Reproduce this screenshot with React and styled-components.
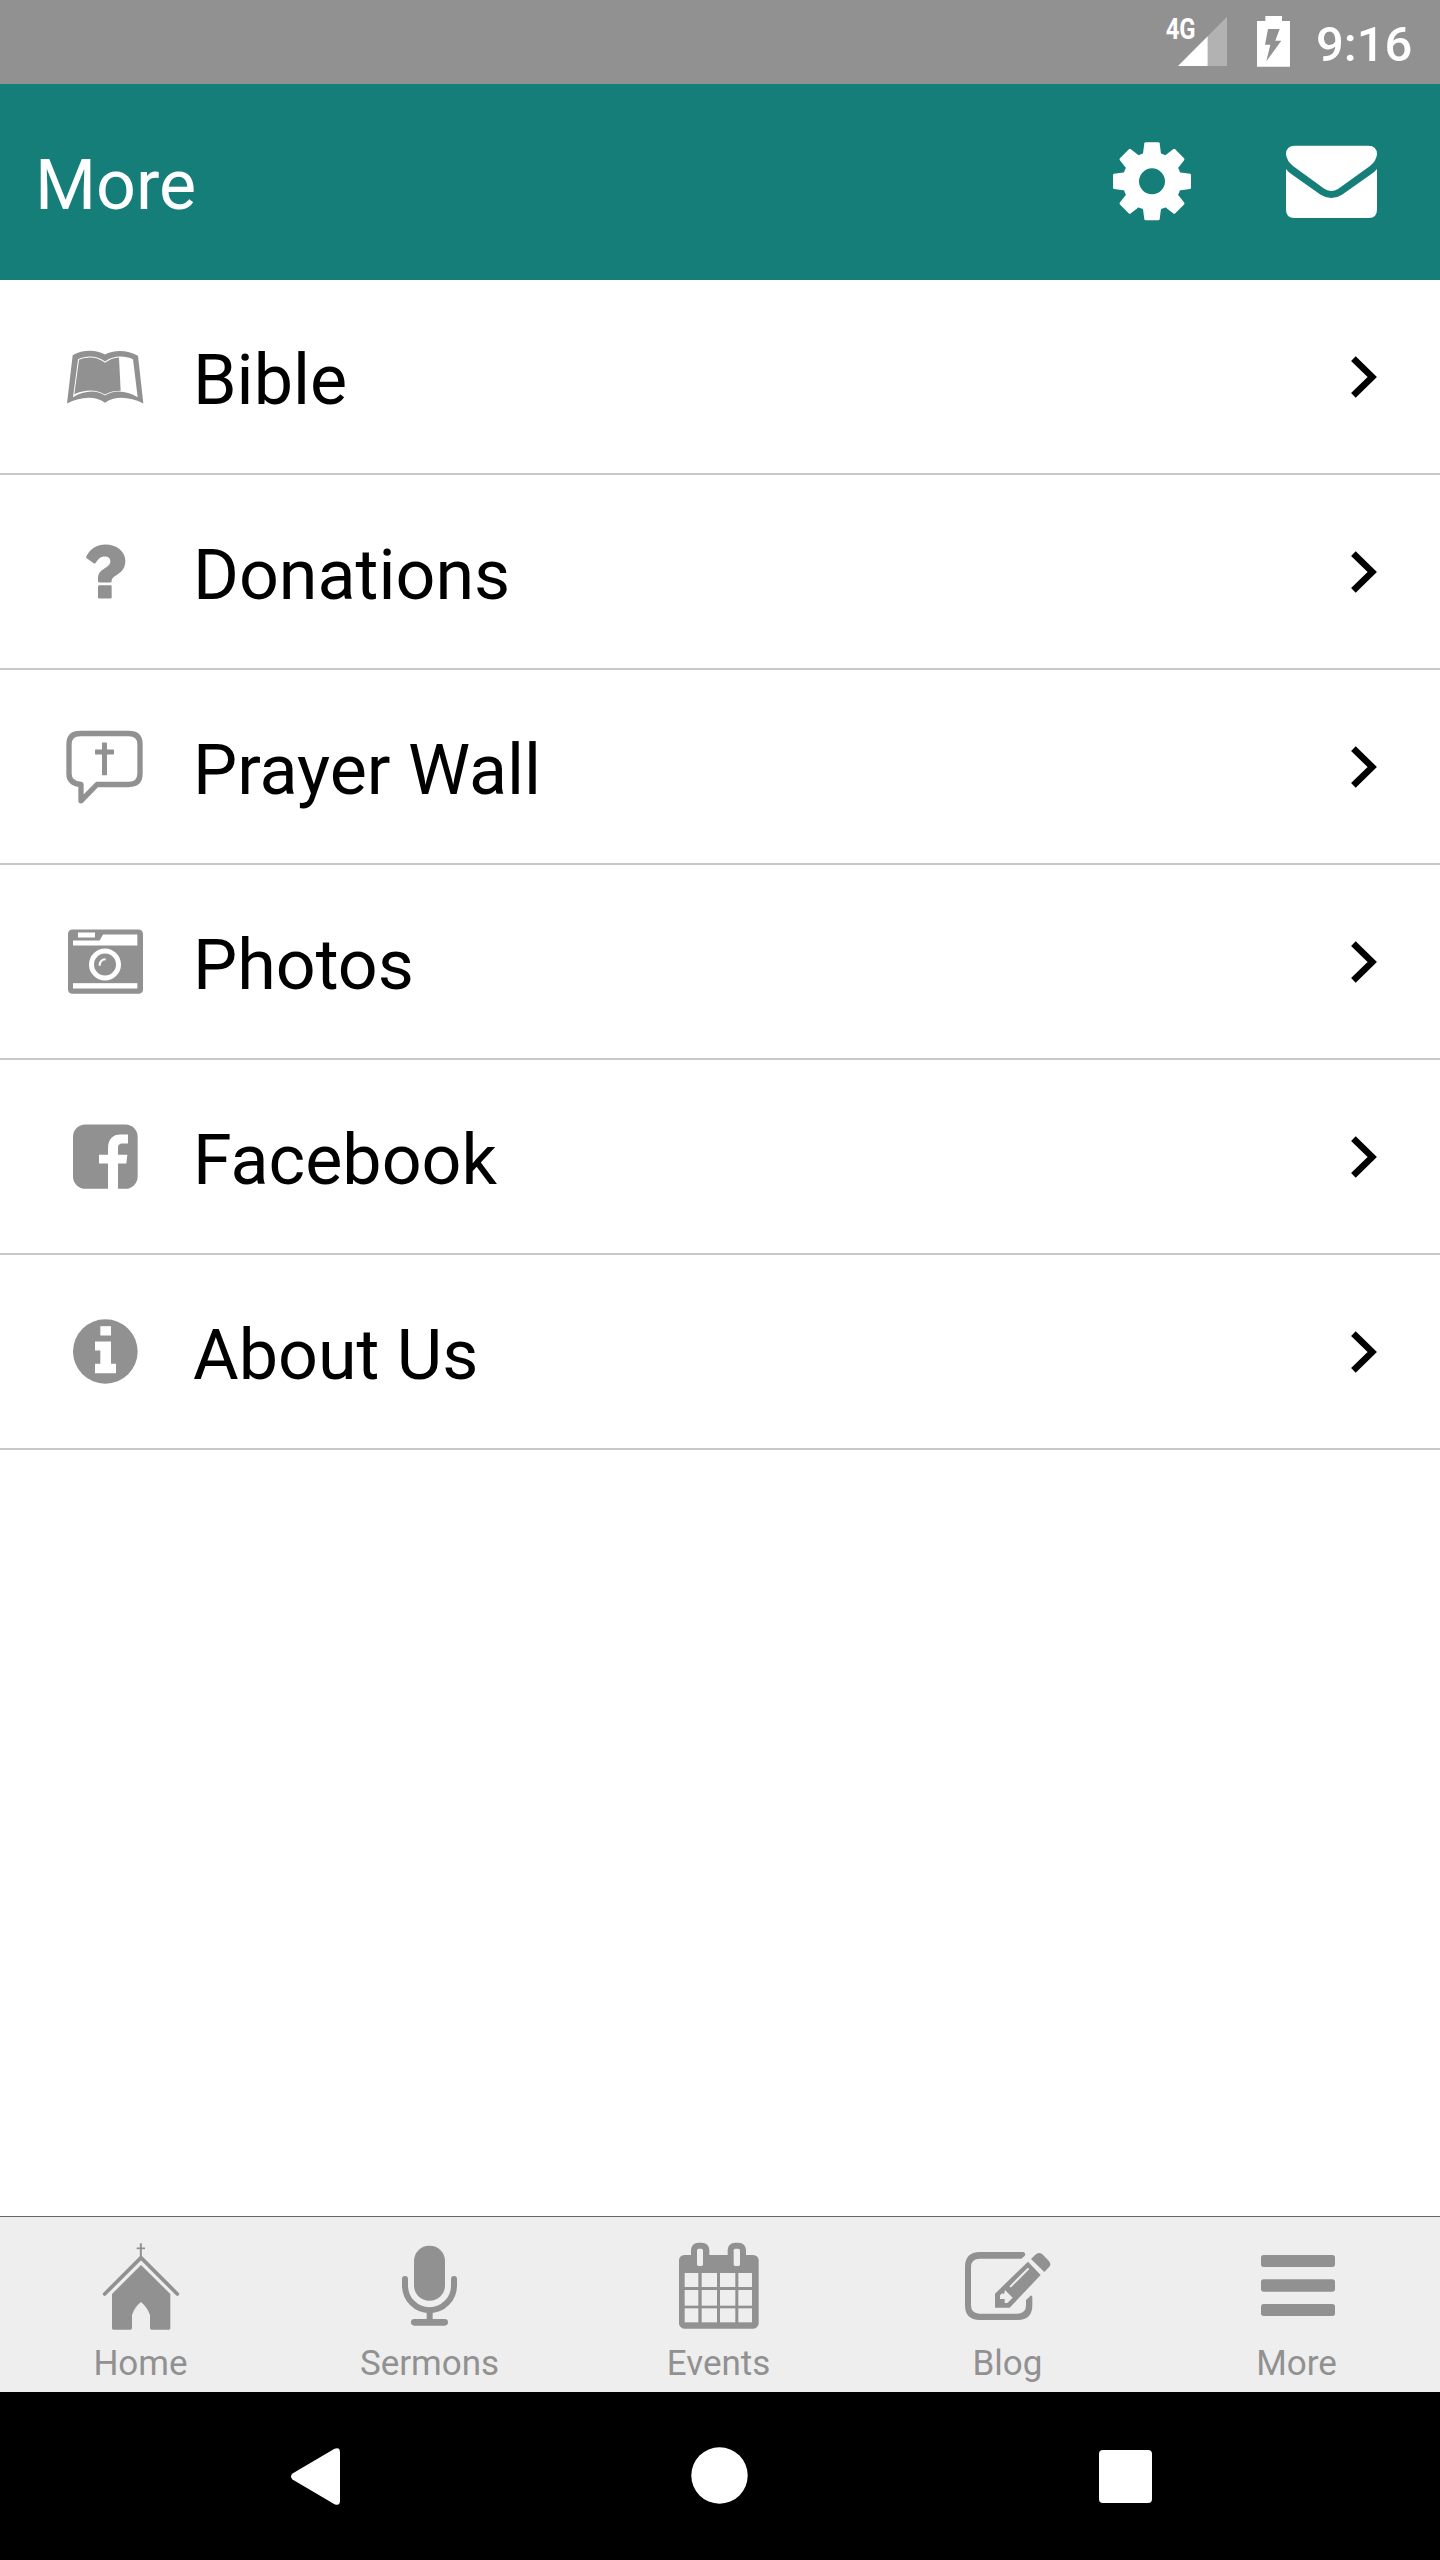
import React from 'react'
import styled, { createGlobalStyle } from 'styled-components'

const GlobalStyle = createGlobalStyle`
  * {
    box-sizing: border-box;
  }
  body {
    margin: 0;
    background-color: #fff;
    font-family: Roboto, 'Liberation Sans', sans-serif;
  }
  svg {
    display: block;
    flex-shrink: 0;
  }
`

const Screen = styled.div`
  display: flex;
  flex-direction: column;
  width: 1440px;
  height: 2560px;
  overflow: hidden;
`

// -------------------- status bar --------------------
const StatusBar = styled.div`
  display: flex;
  justify-content: flex-end;
  flex-shrink: 0;
  height: 84px;
  padding-right: 26px;
  background-color: #919191;
  color: #fff;
`
const Battery = styled.svg`
  width: 33px;
  height: 84px;
  margin: 0 26px 0 29px;
`
const Signal = styled.svg`
  width: 63px;
  height: 84px;
`
const Clock = styled.span`
  width: 98px;
  padding-top: 5px;
  font-size: 49px;
  font-weight: 500;
  line-height: 79px;
  white-space: nowrap;
`

// -------------------- header --------------------
const Header = styled.header`
  display: flex;
  align-items: center;
  flex-shrink: 0;
  height: 196px;
  padding: 0 63px 0 35px;
  background-color: #167e79;
  color: #fff;
`
const Title = styled.h1`
  flex: 1;
  margin: 0;
  padding-top: 6px;
  font-size: 70px;
  font-weight: 400;
`
const HeaderActions = styled.div`
  display: flex;
  align-items: center;
  column-gap: 94px;
`
const HeaderIcon = styled.svg`
  width: ${props => props.$width}px;
  height: ${props => props.$height}px;
  fill: #fff;
`

// -------------------- list --------------------
const List = styled.main`
  flex: 1;
  background-color: #fff;
`
const Row = styled.div`
  display: flex;
  align-items: center;
  height: 195px;
  padding: 0 63px 0 60px;
  border-bottom: 2px solid #c8c8c8;
`
const RowIcon = styled.svg`
  width: 90px;
  height: 90px;
  margin-right: 43px;
  fill: #919191;
`
const RowTitle = styled.span`
  flex: 1;
  padding-top: 7px;
  font-size: 70px;
  color: #000;
`
const Chevron = styled.svg`
  width: 26px;
  height: 42px;
  fill: none;
  stroke: #000;
  stroke-width: 6.6;
`

// -------------------- tabs --------------------
const TabBar = styled.nav`
  display: flex;
  flex-shrink: 0;
  height: 176px;
  border-top: 1px solid #666;
  background-color: #eee;
`
const Tabs = styled.div`
  display: flex;
  margin-left: -4px;
`
const Tab = styled.div`
  display: flex;
  flex-direction: column;
  align-items: center;
  row-gap: 6px;
  width: 289px;
`
const TabIcon = styled.svg`
  width: 96px;
  height: 120px;
  fill: #919191;
`
const TabLabel = styled.span`
  font-size: 35px;
  line-height: 41px;
  color: #919191;
`

// -------------------- system navigation --------------------
const SystemBar = styled.div`
  display: flex;
  justify-content: center;
  flex-shrink: 0;
  height: 168px;
  background-color: #000;
`
const SystemButton = styled.div`
  display: flex;
  align-items: center;
  justify-content: center;
  width: 405px;
`
const SystemIcon = styled.svg`
  width: 60px;
  height: 60px;
  fill: #fff;
`

const angles = [0, 45, 90, 135, 180, 225, 270, 315]
const calendarColumns = [[254, 41], [305, 46], [360, 46], [415, 41]]
const calendarRows = [[219, 42], [270, 47], [325, 42]]

const rows = [
  {
    title: 'Bible',
    viewBox: '180 154.5 270 270',
    icon: (
      <>
        <path
          fillRule='evenodd'
          d='M218 224C248 206 290 207 315 222C341 207 383 207 414 226L430 369C392 350 345 344 315 367C285 344 240 350 201 369Z
            M234 236L219 350C250 331 288 326 315 345C343 326 381 331 413 350L399 236C370 223 338 226 315 243C292 226 262 223 234 236Z'
        />
        <path d='M237 238C265 227 292 229 315 247C328 237 341 232 357 231L362 331C344 331 329 334 315 342C288 326 256 327 223 341Z' />
      </>
    ),
  },
  {
    title: 'Donations',
    viewBox: '180 739.5 270 270',
    icon: (
      <>
        <path d='M259 827C272 804 291 792 316 792C349 792 376 812 376 841C376 884 335 882 335 902Q335 906 331 906H298Q294 906 294 902V893C294 862 331 864 331 842C331 832 323 828 314 828C302 828 296 834 288 846Q285 851 281 848L260 833Q257 830 259 827Z' />
        <rect x='294' y='914' width='41' height='40' rx='4' />
      </>
    ),
  },
  {
    title: 'Prayer Wall',
    viewBox: '180 154.5 270 270',
    icon: (
      <>
        <path
          fill='none'
          stroke='#919191'
          strokeWidth='16'
          strokeLinejoin='round'
          d='M291 342H386Q420 342 420 310V221Q420 189 386 189H241Q207 189 207 221V310Q207 340 243 342V391Z'
        />
        <rect x='306' y='216' width='15' height='98' rx='2' />
        <rect x='285' y='237' width='57' height='15' rx='2' />
      </>
    ),
  },
  {
    title: 'Photos',
    viewBox: '180 739.5 270 270',
    icon: (
      <>
        <rect x='204' y='777' width='225' height='193' rx='13' />
        <g fill='#fff'>
          <rect x='234' y='786' width='51' height='15' />
          <path d='M219 810H299L309 792H412V825H219Z' />
          <rect x='219' y='938' width='193' height='16' />
        </g>
        <g fill='none' stroke='#fff'>
          <circle cx='315' cy='882' r='40.5' strokeWidth='15' />
          <path strokeWidth='6' d='M299 886Q299 866 317 866' />
        </g>
      </>
    ),
  },
  {
    title: 'Facebook',
    viewBox: '180 154.5 270 270',
    icon: (
      <>
        <rect x='219' y='192' width='194' height='193' rx='37' />
        <path fill='#fff' d='M324 386V309H297V283H324V264C324 236 338 222 362 222H384V249H369C357 249 354 254 354 263V283H382L379 309H354V386Z' />
      </>
    ),
  },
  {
    title: 'About Us',
    viewBox: '180 739.5 270 270',
    icon: (
      <>
        <circle cx='316' cy='873' r='97' />
        <g fill='#fff'>
          <rect x='301' y='797' width='32' height='28' />
          <path d='M285 843H333V910H348V938H285V910H301V870H285Z' />
        </g>
      </>
    ),
  },
]

const tabs = [
  {
    title: 'Home',
    viewBox: '279 51 288 360',
    icon: (
      <>
        <rect x='419.5' y='130' width='6' height='42' />
        <rect x='410' y='142.5' width='25' height='5' />
        <path fill='none' stroke='#919191' strokeWidth='11' strokeLinecap='round' d='M314 282L423 173L532 282' />
        <path d='M423 195L511 282V385Q511 389 507 389H455Q450 389 450 384V345Q442 322 423 306Q403 322 396 345V384Q396 389 391 389H340Q336 389 336 385V282Z' />
      </>
    ),
  },
  {
    title: 'Sermons',
    viewBox: '1146 51 288 360',
    icon: (
      <>
        <rect x='1242' y='137' width='93' height='165' rx='46' />
        <path fill='none' stroke='#919191' strokeWidth='18' strokeLinecap='round' d='M1215 237V257A73.5 73.5 0 0 0 1362 257V237' />
        <rect x='1280' y='332' width='18' height='30' />
        <rect x='1233' y='357' width='111' height='20' rx='10' />
      </>
    ),
  },
  {
    title: 'Events',
    viewBox: '213 51 288 360',
    icon: (
      <>
        <rect x='237' y='165' width='239' height='221' rx='16' />
        <rect x='273' y='128' width='55' height='85' rx='22' />
        <rect x='383' y='128' width='55' height='85' rx='22' />
        <g fill='#eee'>
          <rect x='291' y='146' width='18' height='52' rx='5' />
          <rect x='401' y='146' width='19' height='52' rx='5' />
          {calendarRows.map(([y, height]) => calendarColumns.map(([x, width]) => (
            <rect key={`${x}-${y}`} x={x} y={y} width={width} height={height} />
          )))}
        </g>
      </>
    ),
  },
  {
    title: 'Blog',
    viewBox: '1080 51 288 360',
    icon: (
      <>
        <path d='M1270 156Q1276 158 1276 163Q1276 168 1264 176H1139Q1113 176 1113 202V316Q1113 341 1139 341H1253Q1278 341 1278 316V300L1292 287Q1297 286 1297 292V315Q1297 360 1253 360H1139Q1095 360 1095 316V202Q1095 156 1139 156Z' />
        <path d='M1293 177L1306 164Q1316 154 1327 163L1346 182Q1355 192 1348 200L1333 216Z' />
        <path d='M1284 185L1322 225L1229 323H1185V281Z' />
        <path fill='none' stroke='#eee' strokeWidth='6' strokeLinecap='round' d='M1232 259L1284 207' />
        <path fill='#eee' d='M1200 286L1206 280L1212 282L1215 270L1238 293L1222 309H1214V297H1200Z' />
      </>
    ),
  },
  {
    title: 'More',
    viewBox: '447 51 288 360',
    icon: (
      <>
        <rect x='483' y='165' width='222' height='36' rx='8' />
        <rect x='483' y='238' width='222' height='37' rx='8' />
        <rect x='483' y='312' width='222' height='36' rx='8' />
      </>
    ),
  },
]

// ------------------------------------------------------------ component ------------------------------------------------------------
export default function App() {

  const rowComponents = rows.map(el => (
    <Row key={el.title}>
      <RowIcon viewBox={el.viewBox}>{el.icon}</RowIcon>
      <RowTitle>{el.title}</RowTitle>
      <Chevron viewBox='0 0 26 42'>
        <path d='M2.4 2.6L21.2 21L2.4 39.4' />
      </Chevron>
    </Row>
  ))

  const tabComponents = tabs.map(el => (
    <Tab key={el.title}>
      <TabIcon viewBox={el.viewBox}>{el.icon}</TabIcon>
      <TabLabel>{el.title}</TabLabel>
    </Tab>
  ))

  return (
    <>
      <GlobalStyle />
      <Screen>
        {/* status bar */}
        <StatusBar>
          <Signal viewBox='75 0 189 252' fill='#fff'>
            <path opacity='.3' d='M203 109L261 50V198H203Z' />
            <path d='M114 198L203 109V198Z' />
            <text x='77' y='117' fontSize='87' fontWeight='700' textLength='90' lengthAdjust='spacingAndGlyphs'>4G</text>
          </Signal>
          <Battery viewBox='351 0 99 252' fill='#fff'>
            <path d='M376 48H426V63H450V200H351V63H376Z' />
            <path fill='#919191' d='M384 87H419L406 122H424L379 184L391 134H375Z' />
          </Battery>
          <Clock>9:16</Clock>
        </StatusBar>
        {/* header */}
        <Header>
          <Title>More</Title>
          <HeaderActions>
            <HeaderIcon $width={80} $height={80} viewBox='96 96 240 240'>
              <circle cx='216' cy='214' r='63.5' fill='none' stroke='#fff' strokeWidth='49' />
              {angles.map(angle => (
                <path
                  key={angle}
                  transform={`translate(216 214) rotate(${angle})`}
                  d='M-28 -75L-23 -114Q-22 -117 -19 -117H19Q22 -117 23 -114L28 -75Z'
                />
              ))}
            </HeaderIcon>
            <HeaderIcon $width={91} $height={76} viewBox='618 102 273 228'>
              <path d='M618 133Q618 107 644 107H865Q891 107 891 133Q889 153 870 168L774 237Q754 249 734 237L639 168Q620 153 618 133Z' />
              <path d='M618 177Q624 186 638 195L722 254Q754 274 786 254L870 195Q884 186 891 177V299Q891 324 866 324H643Q618 324 618 299Z' />
            </HeaderIcon>
          </HeaderActions>
        </Header>
        {/* menu */}
        <List>{rowComponents}</List>
        {/* tabs */}
        <TabBar>
          <Tabs>{tabComponents}</Tabs>
        </TabBar>
        {/* system buttons */}
        <SystemBar>
          <SystemButton>
            <SystemIcon viewBox='0 0 60 60'>
              <path d='M7.5 27.5L49.5 2.8Q55 .5 55 6.5V54.5Q55 60.5 49.5 58.2L7.5 33.5Q4.5 30.5 7.5 27.5Z' />
            </SystemIcon>
          </SystemButton>
          <SystemButton>
            <SystemIcon viewBox='0 0 60 60'>
              <circle cx='29.5' cy='29.5' r='28.2' />
            </SystemIcon>
          </SystemButton>
          <SystemButton>
            <SystemIcon viewBox='0 0 60 60'>
              <rect x='4' y='4' width='53' height='53' rx='4' />
            </SystemIcon>
          </SystemButton>
        </SystemBar>
      </Screen>
    </>
  )
}
